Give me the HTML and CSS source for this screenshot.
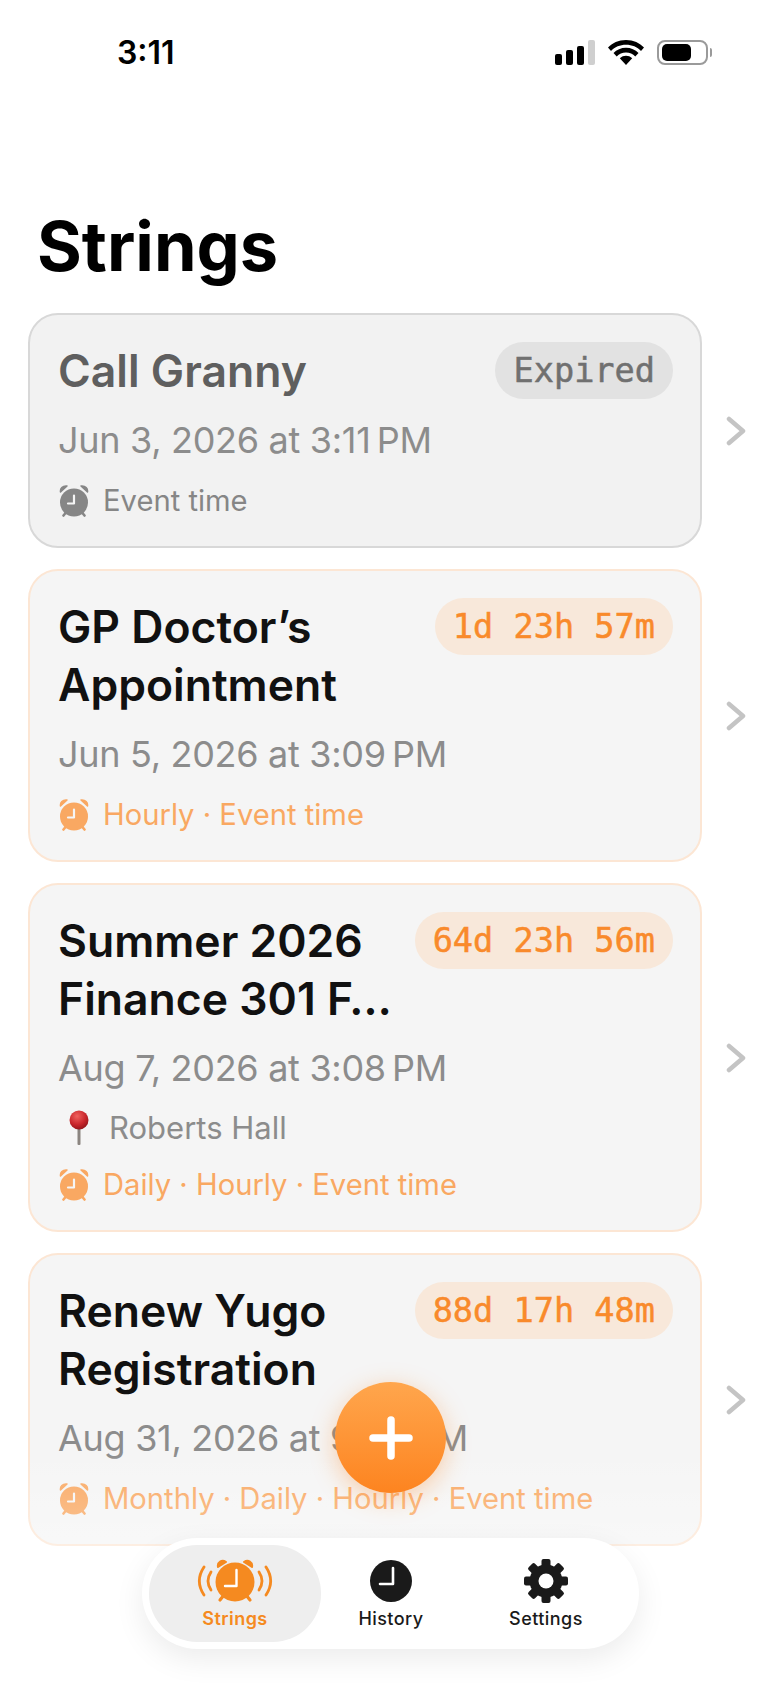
FILE: index.html
```html
<!DOCTYPE html>
<html>
  <head>
    <meta charset="utf-8">
    <link rel="stylesheet" href="styles.css">
  </head>
  <body>
    <svg class="defs" width="0" height="0">
      <!-- Small alarm clock used in the reminder rows -->
      <symbol id="alarm" viewBox="0 0 30 32">
        <path d="M1.500 7C1 3.500 3.500 0.500 8 1ZM28.500 7C29 3.500 26.500 0.500 22 1Z" fill="currentColor" stroke="currentColor" stroke-width="1.500" stroke-linejoin="round"/>
        <path d="M7 27.500 4.500 30.500M23 27.500 25.500 30.500" stroke="currentColor" stroke-width="2.600" stroke-linecap="round"/>
        <circle cx="15" cy="17.500" r="14" fill="currentColor"/>
        <path d="M15 10.500V18.500H9" fill="none" stroke="#f5f5f5" stroke-width="2.200" stroke-linecap="round" stroke-linejoin="round"/>
      </symbol>
    </svg>

    <div class="phone">
      <div class="status-bar">
        <span class="clock">3:11</span>
        <div class="status-icons">
          <div class="signal">
            <span class="bar bar-1"></span>
            <span class="bar bar-2"></span>
            <span class="bar bar-3"></span>
            <span class="bar bar-4"></span>
          </div>
          <svg class="wifi" width="36" height="25" viewBox="0 0 36 25">
            <path d="M18 25 11.800 18.200C15.300 14.900 20.700 14.900 24.200 18.200Z"/>
            <path d="M18 7.800C23 7.800 27.300 9.800 30.500 13L27.300 16.400C24.900 14 21.700 12.600 18 12.600S11.100 14 8.700 16.400L5.500 13C8.700 9.800 13 7.800 18 7.800Z"/>
            <path d="M18 0C25.500 0 31.800 2.900 36 7.600L33 10.900C29.200 7 24 4.800 18 4.800S6.800 7 3 10.900L0 7.600C4.200 2.900 10.500 0 18 0Z"/>
          </svg>
          <div class="battery">
            <div class="battery-body"><span class="battery-fill"></span></div>
            <span class="battery-tip"></span>
          </div>
        </div>
      </div>

      <h1 class="page-title">Strings</h1>

      <div class="string-list">
        <div class="string-row">
          <div class="card card-expired">
            <div class="card-head">
              <div class="card-title">Call Granny</div>
              <span class="badge">Expired</span>
            </div>
            <div class="card-date">Jun 3, 2026 at 3:11&#8201;PM</div>
            <div class="card-meta">
              <svg class="meta-icon"><use href="#alarm"/></svg>
              <span>Event time</span>
            </div>
          </div>
          <svg class="chevron" width="20" height="30" viewBox="0 0 20 30"><path d="M3 3 17 15 3 27"/></svg>
        </div>

        <div class="string-row">
          <div class="card">
            <div class="card-head">
              <div class="card-title">GP Doctor’s Appointment</div>
              <span class="badge">1d 23h 57m</span>
            </div>
            <div class="card-date">Jun 5, 2026 at 3:09&#8201;PM</div>
            <div class="card-meta">
              <svg class="meta-icon"><use href="#alarm"/></svg>
              <span>Hourly · Event time</span>
            </div>
          </div>
          <svg class="chevron" width="20" height="30" viewBox="0 0 20 30"><path d="M3 3 17 15 3 27"/></svg>
        </div>

        <div class="string-row">
          <div class="card">
            <div class="card-head">
              <div class="card-title">Summer 2026 Finance 301 F…</div>
              <span class="badge">64d 23h 56m</span>
            </div>
            <div class="card-date">Aug 7, 2026 at 3:08&#8201;PM</div>
            <div class="card-place">
              <svg class="pin" width="22" height="36" viewBox="0 0 22 36">
                <defs>
                  <radialGradient id="pin-head" cx="0.4" cy="0.3" r="0.75">
                    <stop offset="0" stop-color="#f0625e"/>
                    <stop offset="0.6" stop-color="#c9262b"/>
                    <stop offset="1" stop-color="#8f1419"/>
                  </radialGradient>
                </defs>
                <rect x="9.500" y="16" width="3" height="19" rx="1" fill="#8b8580"/>
                <circle cx="11" cy="10" r="9.500" fill="url(#pin-head)"/>
              </svg>
              <span>Roberts Hall</span>
            </div>
            <div class="card-meta">
              <svg class="meta-icon"><use href="#alarm"/></svg>
              <span>Daily · Hourly · Event time</span>
            </div>
          </div>
          <svg class="chevron" width="20" height="30" viewBox="0 0 20 30"><path d="M3 3 17 15 3 27"/></svg>
        </div>

        <div class="string-row">
          <div class="card">
            <div class="card-head">
              <div class="card-title">Renew Yugo Registration</div>
              <span class="badge">88d 17h 48m</span>
            </div>
            <div class="card-date">Aug 31, 2026 at 9:45&#8201;PM</div>
            <div class="card-meta">
              <svg class="meta-icon"><use href="#alarm"/></svg>
              <span>Monthly · Daily · Hourly · Event time</span>
            </div>
          </div>
          <svg class="chevron" width="20" height="30" viewBox="0 0 20 30"><path d="M3 3 17 15 3 27"/></svg>
        </div>
      </div>

      <div class="list-fade"></div>

      <button class="add-button">
        <svg width="44" height="44" viewBox="0 0 44 44"><path d="M22 4V40M4 22H40"/></svg>
      </button>

      <nav class="tab-bar">
        <div class="tab tab-active">
          <svg class="tab-icon" width="76" height="44" viewBox="0 0 76 44">
            <!-- ringing waves -->
            <g fill="none" stroke="#f58a20" stroke-width="2.800" stroke-linecap="round">
              <path d="M7 8C1 17 1 27 7 36"/>
              <path d="M14 13C10 19 10 25 14 31"/>
              <path d="M69 8C75 17 75 27 69 36"/>
              <path d="M62 13C66 19 66 25 62 31"/>
            </g>
            <path d="M27 36 23 41M49 36 53 41" stroke="#f58a20" stroke-width="3.200" stroke-linecap="round"/>
            <path d="M21 8C20 3 25 0 29 3ZM55 8C56 3 51 0 47 3Z" fill="#f58a20" stroke="#f58a20" stroke-width="2" stroke-linejoin="round"/>
            <circle cx="38" cy="23" r="19.500" fill="#f58a20"/>
            <path d="M39.500 11V27H28" fill="none" stroke="#fff" stroke-width="2.400" stroke-linecap="round" stroke-linejoin="round"/>
          </svg>
          <span class="tab-label">Strings</span>
        </div>
        <div class="tab">
          <svg class="tab-icon" width="44" height="44" viewBox="0 0 44 44">
            <circle cx="22" cy="22" r="21" fill="#1a1a1a"/>
            <path d="M24 9V25H11" fill="none" stroke="#fff" stroke-width="2.600" stroke-linecap="round" stroke-linejoin="round"/>
          </svg>
          <span class="tab-label">History</span>
        </div>
        <div class="tab">
          <svg class="tab-icon" width="44" height="44" viewBox="-22 -22 44 44">
            <g fill="#1a1a1a">
              <circle r="16.500"/>
              <rect x="-4.500" y="-22" width="9" height="44" rx="2"/>
              <rect x="-4.500" y="-22" width="9" height="44" rx="2" transform="rotate(45)"/>
              <rect x="-4.500" y="-22" width="9" height="44" rx="2" transform="rotate(90)"/>
              <rect x="-4.500" y="-22" width="9" height="44" rx="2" transform="rotate(135)"/>
            </g>
            <circle r="7.500" fill="#fff"/>
          </svg>
          <span class="tab-label">Settings</span>
        </div>
      </nav>
    </div>
  </body>
</html>
```

FILE: styles.css
```css
body {
  margin: 0;
  padding: 0;
  background: #fff;
  font-family: Inter, "Noto Sans", sans-serif;
}

.defs {
  display: block;
  height: 0;
}

.phone {
  position: relative;
  width: 780px;
  height: 1688px;
  overflow: hidden;
  background: #fff;
}

/* Status bar */
.status-bar {
  display: flex;
  justify-content: space-between;
  align-items: center;
  height: 25px;
  padding: 40px 68px 0 117px;
}

.clock {
  font-size: 32px;
  font-weight: 600;
  line-height: 25px;
  color: #000;
}

.status-icons {
  display: flex;
  align-items: center;
  gap: 13px;
}

.signal {
  display: flex;
  align-items: flex-end;
  gap: 4px;
  height: 25px;
}

.bar {
  width: 7px;
  background: #000;
  border-radius: 2px;
}

.bar-1 { height: 11px; }
.bar-2 { height: 15px; }
.bar-3 { height: 19px; }
.bar-4 { height: 25px; background: #cfcfcf; }

.battery {
  display: flex;
  align-items: center;
  gap: 2px;
}

.battery-body {
  display: flex;
  align-items: center;
  box-sizing: border-box;
  width: 51px;
  height: 25px;
  padding: 0 3px;
  border: 2px solid #9a9a9a;
  border-radius: 8px;
}

.battery-fill {
  width: 29px;
  height: 17px;
  background: #000;
  border-radius: 5px;
}

.battery-tip {
  width: 2px;
  height: 9px;
  background: #9a9a9a;
  border-radius: 0 2px 2px 0;
}

/* Large page heading */
.page-title {
  margin: 147px 0 0 37px;
  font-size: 68.5px;
  font-weight: 700;
  line-height: 70px;
  color: #000;
}

/* Card list */
.string-list {
  display: flex;
  flex-direction: column;
  gap: 21px;
  margin-top: 31px;
  padding-left: 28px;
}

.string-row {
  display: flex;
  align-items: center;
  gap: 24px;
}

.card {
  box-sizing: border-box;
  width: 674px;
  padding: 27px 27px 27px 28px;
  background: #f5f5f5;
  border: 2px solid #fce6d4;
  border-radius: 30px;
}

.card-expired {
  background: #f2f2f2;
  border-color: #d8d8d8;
}

.card-head {
  display: flex;
  justify-content: space-between;
  align-items: flex-start;
  gap: 8px;
}

.card-title {
  font-size: 44.5px;
  font-weight: 600;
  line-height: 58px;
  color: #111;
}

.card-expired .card-title {
  color: #5f5f5f;
}

.badge {
  flex-shrink: 0;
  padding: 0 18px;
  font-family: "DejaVu Sans Mono", "Liberation Mono", monospace;
  font-size: 33.6px;
  line-height: 57px;
  white-space: nowrap;
  -webkit-text-stroke: 0.5px currentColor;
  color: #f98a2b;
  background: #f8e8da;
  border-radius: 29px;
}

.card-expired .badge {
  color: #707070;
  background: #e2e2e2;
}

.card-date {
  margin-top: 18px;
  font-size: 36px;
  line-height: 44px;
  letter-spacing: -0.3px;
  color: #8c8c8c;
}

.card-place {
  display: flex;
  align-items: center;
  gap: 19px;
  margin-top: 20px;
  padding-left: 10px;
  font-size: 31px;
  line-height: 36px;
  color: #8c8c8c;
}

.card-meta {
  display: flex;
  align-items: center;
  gap: 14px;
  margin-top: 21px;
  font-size: 29.2px;
  line-height: 36px;
  color: #f9a862;
}

.card-expired .card-meta {
  color: #868686;
}

.meta-icon {
  width: 30px;
  height: 32px;
  margin-left: 1px;
}

.chevron {
  fill: none;
  stroke: #c4c4c4;
  stroke-width: 4.5;
  stroke-linecap: round;
  stroke-linejoin: round;
}

/* List content washes out behind the tab bar */
.list-fade {
  position: absolute;
  left: 0;
  right: 0;
  bottom: 0;
  height: 240px;
  background: linear-gradient(
    to bottom,
    rgba(255, 255, 255, 0) 0%,
    rgba(255, 255, 255, 0.4) 50%,
    rgba(255, 255, 255, 0.7) 100%
  );
}

.add-button {
  position: absolute;
  left: 335px;
  top: 1382px;
  display: flex;
  justify-content: center;
  align-items: center;
  width: 111px;
  height: 111px;
  padding: 0;
  border: none;
  border-radius: 50%;
  background: linear-gradient(to bottom, #ffa64d 0%, #fd8420 100%);
  box-shadow: 0 6px 24px rgba(253, 132, 32, 0.35);
}

.add-button path {
  fill: none;
  stroke: #fff;
  stroke-width: 7.5;
  stroke-linecap: round;
}

/* Floating tab bar */
.tab-bar {
  position: absolute;
  left: 142px;
  top: 1538px;
  box-sizing: border-box;
  display: grid;
  grid-template-columns: 172px 140px 170px;
  width: 497px;
  height: 111px;
  padding: 7px;
  background: #fff;
  border-radius: 56px;
  box-shadow: 0 10px 30px rgba(0, 0, 0, 0.08);
}

.tab {
  display: flex;
  flex-direction: column;
  align-items: center;
  padding-top: 14px;
  font-size: 18px;
  font-weight: 500;
  color: #1a1a1a;
}

.tab-active {
  background: #eeeeee;
  border-radius: 48px;
  font-weight: 600;
  color: #f58a20;
}

.tab-icon {
  display: block;
}

.tab-label {
  margin-top: 5px;
  line-height: 22px;
  letter-spacing: 0.45px;
}
```
